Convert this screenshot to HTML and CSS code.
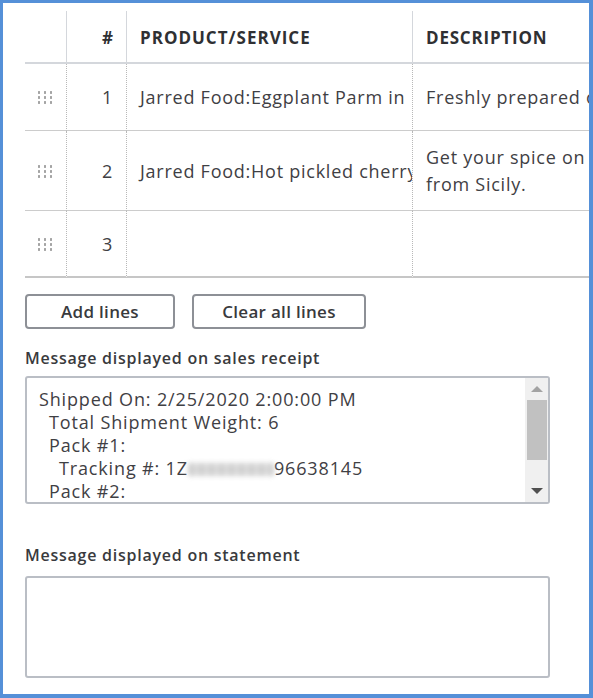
FILE: index.html
```html
<!DOCTYPE html>
<html lang="en">
<head>
<meta charset="utf-8">
<title>Sales receipt lines</title>
<link rel="stylesheet" href="styles.css">
</head>
<body>
<div class="frame">
  <div class="grid">
    <div class="hcell drag-col"></div>
    <div class="hcell num-col">#</div>
    <div class="hcell prod-col">PRODUCT/SERVICE</div>
    <div class="hcell desc-col">DESCRIPTION</div>

    <div class="cell drag-col row1"><span class="handle"></span></div>
    <div class="cell num-col row1">1</div>
    <div class="cell prod-col row1">Jarred Food:Eggplant Parm in</div>
    <div class="cell desc-col row1">Freshly prepared old family recipe</div>

    <div class="cell drag-col row2"><span class="handle"></span></div>
    <div class="cell num-col row2">2</div>
    <div class="cell prod-col row2">Jarred Food:Hot pickled cherry peppers</div>
    <div class="cell desc-col row2 wrap">Get your spice on with peppers<br>from Sicily.</div>

    <div class="cell drag-col row3 last"><span class="handle"></span></div>
    <div class="cell num-col row3 last">3</div>
    <div class="cell prod-col row3 last"></div>
    <div class="cell desc-col row3 last"></div>
  </div>

  <div class="buttons">
    <button class="btn btn-add">Add lines</button>
    <button class="btn btn-clear">Clear all lines</button>
  </div>

  <div class="label label-receipt">Message displayed on sales receipt</div>
  <div class="memo memo-receipt">
    <div class="memo-text">Shipped On: 2/25/2020 2:00:00 PM
<span class="ind1">Total Shipment Weight: 6</span>
<span class="ind1">Pack #1:</span>
<span class="ind2">Tracking #: 1Z<span class="blur"></span>96638145</span>
<span class="ind1">Pack #2:</span></div>
    <div class="scrollbar">
      <div class="sb-btn"><span class="arrow-up"></span></div>
      <div class="sb-track"><div class="sb-thumb"></div></div>
      <div class="sb-btn"><span class="arrow-down"></span></div>
    </div>
  </div>

  <div class="label label-statement">Message displayed on statement</div>
  <div class="memo memo-statement"></div>
</div>
</body>
</html>
```

FILE: styles.css
```css
* { box-sizing: border-box; }
html, body { margin: 0; padding: 0; background: #fff; }
body {
  font-family: "Open Sans", "Noto Sans", sans-serif;
  color: #393a3d;
}
.frame {
  width: 593px;
  height: 698px;
  border-style: solid;
  border-color: #5590d8;
  border-width: 3px 4px 4px 3px;
  padding: 8px 0 0 22px;
  overflow: hidden;
  display: flex;
  flex-direction: column;
  align-items: flex-start;
}
.grid {
  display: grid;
  grid-template-columns: 42px 60px 286px 320px;
  grid-template-rows: 53px 67px 80px 67px;
  flex: none;
}
.hcell {
  border-bottom: 2px solid #d4d7dc;
  border-right: 1px solid #d4d7dc;
  font-weight: 700;
  font-size: 17px;
  letter-spacing: 1px;
  display: flex;
  align-items: center;
  padding-top: 1px;
  white-space: nowrap;
  color: #2f3033;
}
.hcell.desc-col { border-right: none; padding-left: 13px; letter-spacing: 0.8px; }
.hcell.prod-col { padding-left: 13px; }
.hcell.num-col { justify-content: flex-end; padding-right: 12px; }
.cell {
  border-bottom: 1px solid #cccccc;
  border-right: 1px dotted #b8b8b8;
  font-size: 18px;
  letter-spacing: 0.75px;
  display: flex;
  align-items: center;
  white-space: nowrap;
  overflow: hidden;
  color: #3f4044;
}
.cell.last { border-bottom: 2px solid #c6c6c6; }
.cell.desc-col { border-right: none; padding-left: 13px; }
.cell.prod-col { padding-left: 13px; }
.cell.num-col { justify-content: flex-end; padding-right: 13px; }
.cell.drag-col { padding-left: 12px; }
.cell.wrap { line-height: 27px; }
.handle {
  width: 16px;
  height: 14px;
  background-image: radial-gradient(circle, #a4a4a4 1.1px, transparent 1.3px);
  background-size: 6px 5px;
  background-position: -1px 0;
}
.buttons {
  display: flex;
  gap: 17px;
  margin-top: 16px;
}
.btn {
  height: 35px;
  border: 2px solid #8d9096;
  border-radius: 4px;
  background: #fff;
  font-family: inherit;
  font-size: 17px;
  font-weight: 600;
  letter-spacing: 0.3px;
  color: #393a3d;
  padding: 0;
}
.btn-add { width: 150px; }
.btn-clear { width: 174px; }
.label {
  font-size: 16px;
  font-weight: 600;
  letter-spacing: 0.75px;
  color: #393a3d;
}
.label-receipt { margin-top: 19px; line-height: 20px; }
.memo {
  width: 525px;
  border: 2px solid #babec5;
  border-radius: 3px;
  background: #fff;
  margin-top: 8px;
}
.memo-receipt {
  height: 128px;
  display: flex;
}
.memo-text {
  flex: 1;
  white-space: pre;
  font-size: 18px;
  letter-spacing: 0.85px;
  line-height: 23px;
  padding: 10px 0 0 12px;
  overflow: hidden;
  color: #3f4044;
}
.ind1 { padding-left: 10px; }
.ind2 { padding-left: 20px; }
.blur {
  display: inline-block;
  width: 86px;
  height: 13px;
  vertical-align: -1px;
  background: repeating-linear-gradient(90deg, #c4c4c4 0 7px, #dadada 7px 10px);
  filter: blur(2.5px);
  opacity: 0.8;
}
.scrollbar {
  width: 23px;
  background: #f0f0f0;
  display: flex;
  flex-direction: column;
}
.sb-btn {
  height: 22px;
  display: flex;
  align-items: center;
  justify-content: center;
}
.sb-track { flex: 1; padding: 0 1px 0 2px; }
.sb-thumb { height: 60px; background: #c1c1c1; }
.arrow-up {
  width: 0; height: 0;
  border-left: 6px solid transparent;
  border-right: 6px solid transparent;
  border-bottom: 6px solid #a3a3a3;
}
.arrow-down {
  width: 0; height: 0;
  border-left: 6px solid transparent;
  border-right: 6px solid transparent;
  border-top: 6px solid #505050;
}
.label-statement { margin-top: 41px; line-height: 20px; }
.memo-statement { height: 102px; margin-top: 11px; }
```
